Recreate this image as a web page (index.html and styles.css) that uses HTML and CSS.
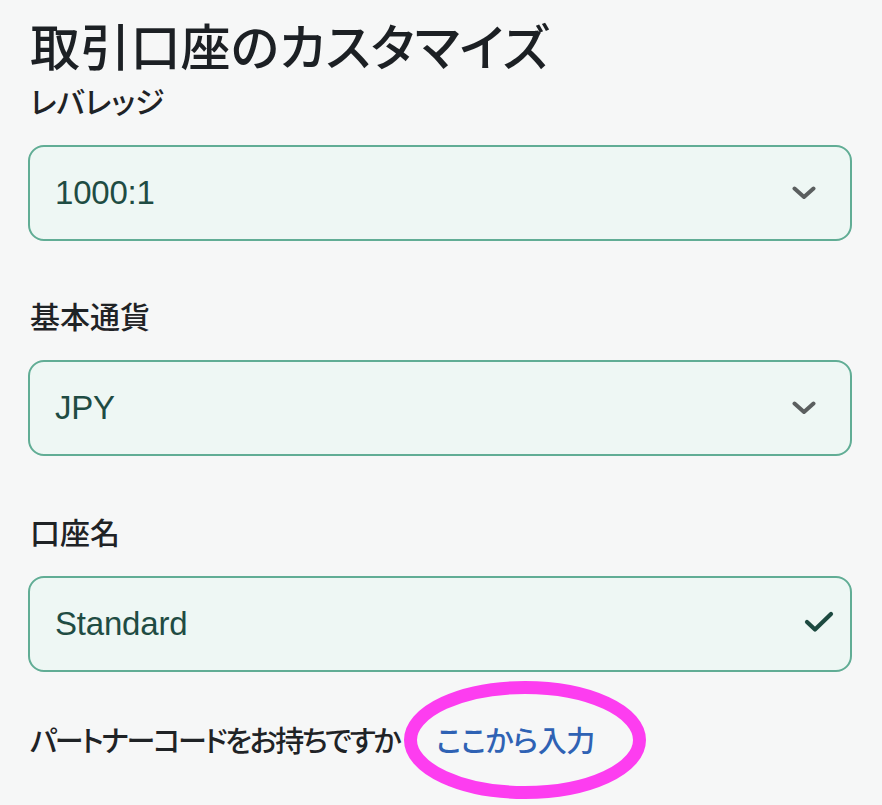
FILE: index.html
```html
<!DOCTYPE html>
<html lang="ja">
<head>
<meta charset="utf-8">
<title>取引口座のカスタマイズ</title>
<link rel="stylesheet" href="styles.css">
</head>
<body>
<main class="page">
  <h1 class="title">取引口座のカスタマイズ</h1>

  <div class="group">
    <label class="label">レバレッジ</label>
    <div class="field">
      <span class="value">1000:1</span>
      <svg class="chev" width="24" height="14" viewBox="0 0 24 14"><path d="M2.5 2.5 L12 11 L21.5 2.5" fill="none" stroke="#5b5f5f" stroke-width="4" stroke-linecap="round" stroke-linejoin="round"/></svg>
    </div>
  </div>

  <div class="group">
    <label class="label">基本通貨</label>
    <div class="field">
      <span class="value">JPY</span>
      <svg class="chev" width="24" height="14" viewBox="0 0 24 14"><path d="M2.5 2.5 L12 11 L21.5 2.5" fill="none" stroke="#5b5f5f" stroke-width="4" stroke-linecap="round" stroke-linejoin="round"/></svg>
    </div>
  </div>

  <div class="group">
    <label class="label">口座名</label>
    <div class="field">
      <span class="value">Standard</span>
      <svg class="check" width="30" height="22" viewBox="0 0 30 22"><path d="M3 11 L11 18.5 L27 3" fill="none" stroke="#1d4a40" stroke-width="4.2" stroke-linecap="round" stroke-linejoin="round"/></svg>
    </div>
  </div>

  <p class="partner">パートナーコードをお持ちですか<a class="link" href="#">ここから入力<svg class="ring" width="250" height="126" viewBox="0 0 250 126"><ellipse cx="125" cy="63" rx="114.5" ry="52.5" fill="none" stroke="#fd3df0" stroke-width="13"/></svg></a></p>
</main>
</body>
</html>
```

FILE: styles.css
```css
html, body {
  margin: 0;
  padding: 0;
  background: #f6f7f7;
}

body {
  font-family: "Noto Sans CJK JP", "Liberation Sans", sans-serif;
  color: #1f2326;
  width: 882px;
  height: 805px;
  overflow: hidden;
}

.page {
  display: flex;
  flex-direction: column;
  padding: 14px 30px 0 28px;
  width: 824px;
}

.title {
  margin: 0;
  font-size: 50px;
  line-height: 60px;
  font-weight: 500;
  font-feature-settings: "palt";
  letter-spacing: 0.2px;
  color: #1c2024;
  padding-left: 2px;
}

.group {
  display: flex;
  flex-direction: column;
  gap: 27px;
  margin-top: 8px;
}

.group + .group {
  margin-top: 56px;
}

.group:nth-of-type(3) {
  margin-top: 57px;
}

.label {
  font-size: 30px;
  line-height: 36px;
  font-weight: 500;
  font-feature-settings: "palt";
  padding-left: 2px;
  color: #1f2326;
}

.field {
  height: 92px;
  border: 2px solid #61ad95;
  border-radius: 16px;
  background: #eef7f4;
  display: flex;
  align-items: center;
  justify-content: space-between;
  padding: 0 34px 0 25px;
}

.value {
  font-family: "Liberation Sans", "Noto Sans", sans-serif;
  font-size: 33px;
  color: #1f4c43;
  letter-spacing: -0.2px;
}

.chev {
  display: block;
}

.check {
  display: block;
  margin-right: -18px;
  margin-top: -4px;
}

.partner {
  margin: 49px 0 0 0;
  padding-left: 2px;
  font-size: 29px;
  line-height: 36px;
  font-weight: 500;
  font-feature-settings: "palt";
  letter-spacing: -2.3px;
  color: #1f2326;
}

.link {
  position: relative;
  margin-left: 37px;
  color: #2f62b4;
  text-decoration: none;
  letter-spacing: -0.5px;
}

.ring {
  position: absolute;
  left: -36px;
  top: -41px;
  pointer-events: none;
}
```
